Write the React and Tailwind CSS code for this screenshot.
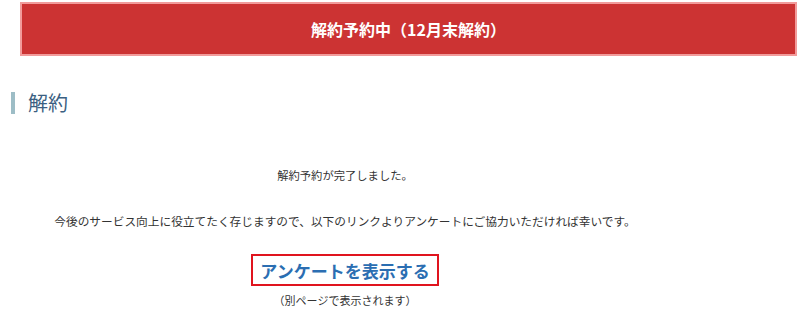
import React from "react";

export default function App() {
  return (
    <div className="w-[800px] h-[318px] bg-white overflow-hidden font-['Noto_Sans_CJK_JP',sans-serif] text-[#333]">
      {/* banner */}
      <div className="pt-[2px] pl-[20px] pr-[3px]">
        <div className="h-[54px] bg-[#cc3333] border-2 border-[#f29b9b] flex items-center justify-center">
          <span className="text-white font-bold text-[16px] leading-none">解約予約中（12月末解約）</span>
        </div>
      </div>

      {/* heading */}
      <div className="mt-[36px] ml-[11px] flex items-center h-[22px]">
        <div className="w-[4px] h-[22px] bg-[#9dbdc6]"></div>
        <h2 className="ml-[13px] text-[20px] leading-none text-[#3b5f82]">解約</h2>
      </div>

      {/* content */}
      <div className="w-[690px] flex flex-col items-center text-center">
        <p className="mt-[56px] text-[11.3px] leading-none">解約予約が完了しました。</p>
        <p className="mt-[34px] text-[11.7px] leading-none">
          今後のサービス向上に役立てたく存じますので、以下のリンクよりアンケートにご協力いただければ幸いです。
        </p>
        <a
          href="#"
          className="mt-[27px] w-[188px] h-[32px] border-2 border-[#e0141e] flex items-center justify-center text-[17px] font-bold text-[#2b6eb2] leading-none"
        >
          アンケートを表示する
        </a>
        <p className="mt-[9px] text-[11px] leading-none">（別ページで表示されます）</p>
      </div>
    </div>
  );
}
